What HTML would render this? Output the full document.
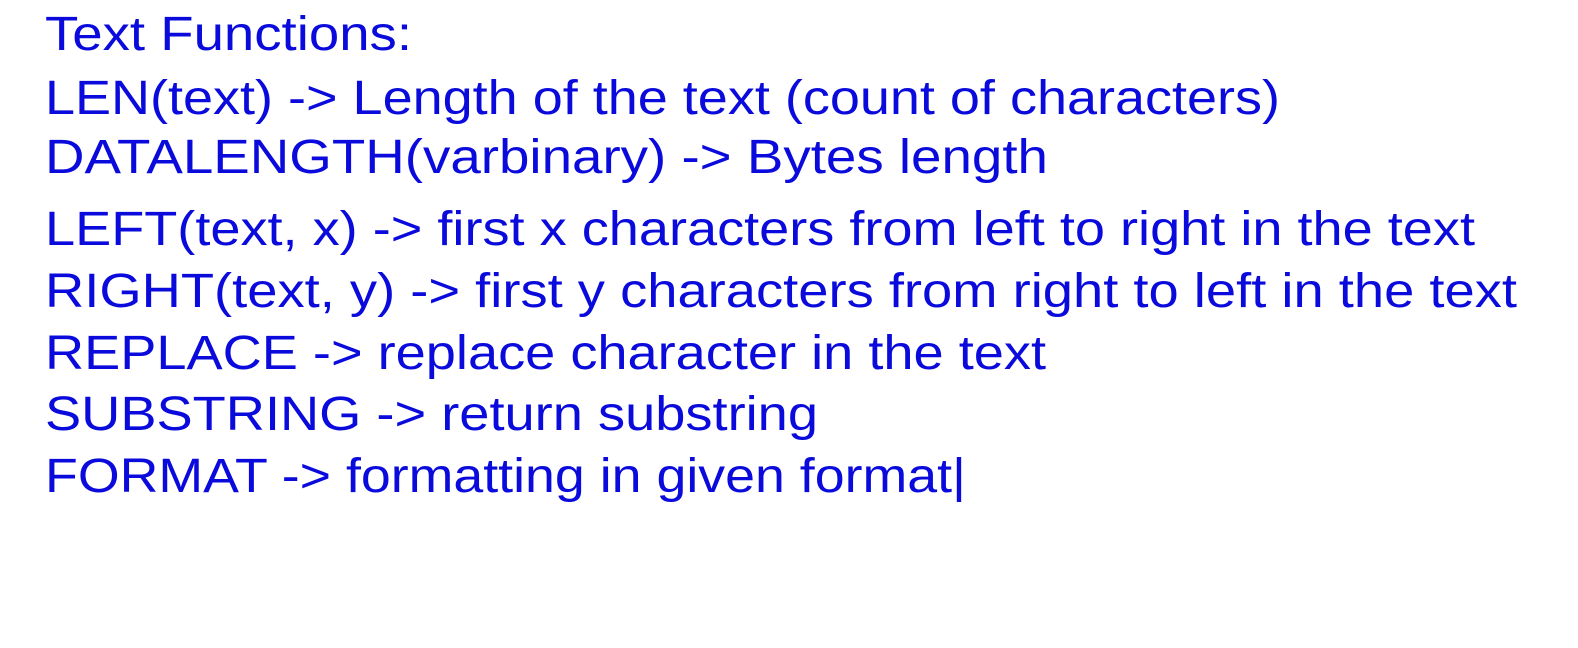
<!DOCTYPE html>
<html><head><style>html,body{margin:0;padding:0;background:#fff;width:1578px;height:648px;overflow:hidden}</style></head>
<body>
<svg width="1578" height="648" xmlns="http://www.w3.org/2000/svg" font-family="Liberation Sans, Arial, sans-serif" font-size="48" fill="#0a0adc">
<text x="45" y="50" textLength="367" lengthAdjust="spacingAndGlyphs">Text Functions:</text>
<text x="45" y="114" textLength="1235" lengthAdjust="spacingAndGlyphs">LEN(text) -&gt; Length of the text (count of characters)</text>
<text x="45" y="173" textLength="1003" lengthAdjust="spacingAndGlyphs">DATALENGTH(varbinary) -&gt; Bytes length</text>
<text x="45" y="245" textLength="1430" lengthAdjust="spacingAndGlyphs">LEFT(text, x) -&gt; first x characters from left to right in the text</text>
<text x="45" y="307" textLength="1472" lengthAdjust="spacingAndGlyphs">RIGHT(text, y) -&gt; first y characters from right to left in the text</text>
<text x="45" y="369" textLength="1001" lengthAdjust="spacingAndGlyphs">REPLACE -&gt; replace character in the text</text>
<text x="45" y="430" textLength="773" lengthAdjust="spacingAndGlyphs">SUBSTRING -&gt; return substring</text>
<text x="45" y="492" textLength="921" lengthAdjust="spacingAndGlyphs">FORMAT -&gt; formatting in given format|</text>
</svg>
</body></html>
